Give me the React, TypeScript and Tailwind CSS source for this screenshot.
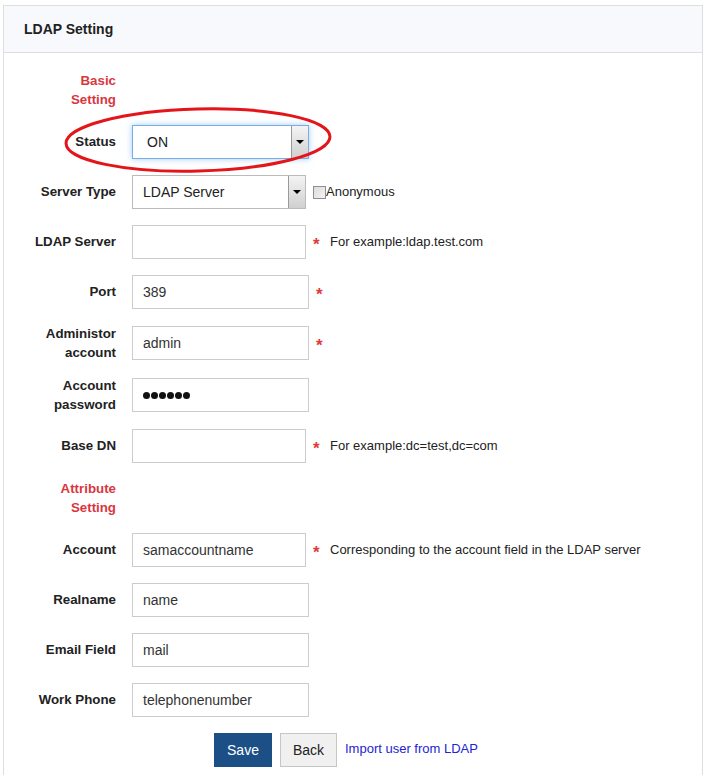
import React from 'react';

const labelCls = 'w-[112px] shrink-0 text-right text-[13.3px] font-bold text-[#222]';

function Row({ label, twoLine, children }: { label: React.ReactNode; twoLine?: boolean; children?: React.ReactNode }) {
  return (
    <div className={`flex items-center gap-4 ${twoLine ? 'h-[36px]' : 'h-[34px]'}`}>
      <div className={`${labelCls} ${twoLine ? 'leading-[19px]' : ''}`}>{label}</div>
      <div className="flex items-center">{children}</div>
    </div>
  );
}

function Field({ value, narrow }: { value?: React.ReactNode; narrow?: boolean }) {
  return (
    <div
      className={`flex h-[34px] items-center border border-[#ccc] bg-white px-[10px] text-[14px] text-[#333] ${
        narrow ? 'w-[174px]' : 'w-[177px]'
      }`}
    >
      {value}
    </div>
  );
}

function Required({ hint }: { hint?: string }) {
  return (
    <>
      <span className="ml-[7px] w-[7px] translate-y-[2px] text-[17px] font-bold leading-none text-[#e03a3a]">*</span>
      {hint && <span className="ml-[10px] text-[13px] text-[#222]">{hint}</span>}
    </>
  );
}

function ArrowBox() {
  return (
    <div className="flex h-full w-[17px] items-center justify-center border-l border-[#9a9a9a] bg-gradient-to-b from-[#f4f4f4] to-[#d0d0d0]">
      <span className="h-0 w-0 border-x-[4px] border-t-[4px] border-x-transparent border-t-black" />
    </div>
  );
}

function Section({ lines }: { lines: string[] }) {
  return (
    <div className="flex">
      <div className="w-[112px] text-right text-[13.3px] font-bold leading-[19px] text-[#d9373f]">
        {lines.map((l) => (
          <div key={l}>{l}</div>
        ))}
      </div>
    </div>
  );
}

export default function App() {
  return (
    <div className="min-h-[775px] bg-white pt-[5px] pl-[3px] font-['Liberation_Sans',Arial,sans-serif]">
      <div className="relative w-[700px] border border-b-0 border-[#dedede]">
        {/* Header */}
        <div className="flex h-[47px] items-center border-b border-[#dedede] bg-[#f7f9fd] pl-[20px] text-[14px] font-bold text-[#222]">
          LDAP Setting
        </div>

        {/* Form */}
        <div className="flex flex-col gap-4 pt-[18px] pb-[8px]">
          <Section lines={['Basic', 'Setting']} />

          <Row label="Status">
            <div className="flex h-[34px] w-[177px] items-stretch border border-[#78aee6] bg-white shadow-[0_0_6px_rgba(90,160,235,0.55)]">
              <div className="flex flex-1 items-center pl-[14px] text-[14px] text-[#222]">ON</div>
              <ArrowBox />
            </div>
          </Row>

          <Row label="Server Type">
            <div className="flex h-[34px] w-[174px] items-stretch border border-[#bbb] bg-white">
              <div className="flex flex-1 items-center pl-[10px] text-[14px] text-[#222]">LDAP Server</div>
              <ArrowBox />
            </div>
            <span className="ml-[7px] h-[13px] w-[13px] border border-[#8f8f8f] bg-gradient-to-br from-[#dcdcdc] to-[#f4f4f4]" />
            <span className="text-[13px] text-[#222]">Anonymous</span>
          </Row>

          <Row label="LDAP Server">
            <Field narrow />
            <Required hint="For example:ldap.test.com" />
          </Row>

          <Row label="Port">
            <Field value="389" />
            <Required />
          </Row>

          <Row
            twoLine
            label={
              <>
                Administor
                <br />
                account
              </>
            }
          >
            <Field value="admin" />
            <Required />
          </Row>

          <Row
            twoLine
            label={
              <>
                Account
                <br />
                password
              </>
            }
          >
            <Field
              value={
                <span className="flex gap-[1px]">
                  {[0, 1, 2, 3, 4, 5].map((i) => (
                    <span key={i} className="h-[7px] w-[7px] rounded-full bg-[#111]" />
                  ))}
                </span>
              }
            />
          </Row>

          <Row label="Base DN">
            <Field narrow />
            <Required hint="For example:dc=test,dc=com" />
          </Row>

          <Section lines={['Attribute', 'Setting']} />

          <Row label="Account">
            <Field narrow value="samaccountname" />
            <Required hint="Corresponding to the account field in the LDAP server" />
          </Row>

          <Row label="Realname">
            <Field value="name" />
          </Row>

          <Row label="Email Field">
            <Field value="mail" />
          </Row>

          <Row label="Work Phone">
            <Field value="telephonenumber" />
          </Row>

          <div className="flex items-center pl-[210px]">
            <button className="h-[34px] w-[58px] bg-[#1b4f86] pt-[1px] text-[14px] text-white">Save</button>
            <button className="ml-[8px] h-[34px] w-[57px] border border-[#c6c6c6] bg-[#f0f0f0] pt-[1px] text-[14px] text-[#222]">
              Back
            </button>
            <a className="ml-[8px] -translate-y-[1px] text-[13px] text-[#2323d6]" href="#">
              Import user from LDAP
            </a>
          </div>
        </div>

        {/* Highlight ring around Status */}
        <svg className="pointer-events-none absolute top-0 left-0" width="700" height="200">
          <ellipse
            cx="194"
            cy="134"
            rx="132"
            ry="31"
            fill="none"
            stroke="#e3151b"
            strokeWidth="3"
            transform="rotate(-1.5 194 134)"
          />
        </svg>
      </div>
    </div>
  );
}
